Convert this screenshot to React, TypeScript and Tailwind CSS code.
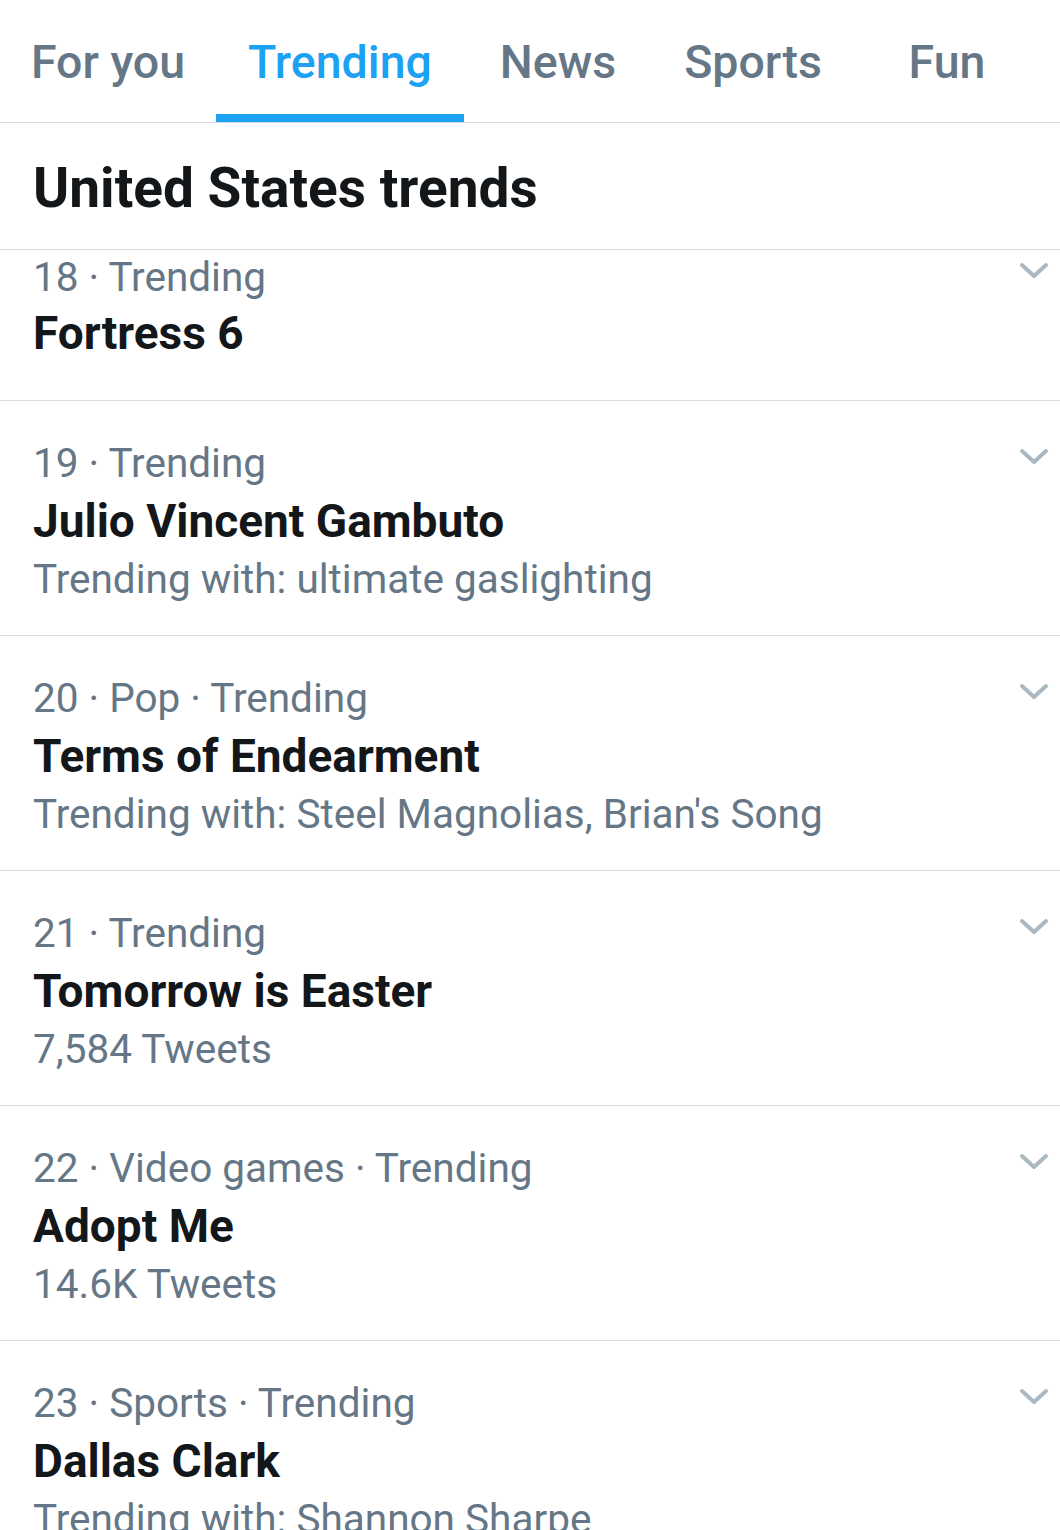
import React from "react";

const FONT = { fontFamily: "Roboto, 'Noto Sans', sans-serif" };

type Trend = {
  meta: string;
  title: string;
  sub?: string;
};

const TABS = [
  { label: "For you", w: "w-[216px]" },
  { label: "Trending", w: "w-[248px]", active: true },
  { label: "News", w: "w-[188px]" },
  { label: "Sports", w: "w-[202px]" },
  { label: "Fun", w: "w-[186px]" },
];

const TRENDS: Trend[] = [
  { meta: "19 · Trending", title: "Julio Vincent Gambuto", sub: "Trending with: ultimate gaslighting" },
  { meta: "20 · Pop · Trending", title: "Terms of Endearment", sub: "Trending with: Steel Magnolias, Brian's Song" },
  { meta: "21 · Trending", title: "Tomorrow is Easter", sub: "7,584 Tweets" },
  { meta: "22 · Video games · Trending", title: "Adopt Me", sub: "14.6K Tweets" },
  { meta: "23 · Sports · Trending", title: "Dallas Clark", sub: "Trending with: Shannon Sharpe" },
];

function Chevron() {
  return (
    <svg width="30" height="18" viewBox="0 0 30 18" fill="none" className="shrink-0">
      <path d="M3 3 L15 14 L27 3" stroke="#aab8c2" strokeWidth="4" strokeLinecap="round" strokeLinejoin="round" />
    </svg>
  );
}

function TrendRow({ t }: { t: Trend }) {
  return (
    <div className="relative border-b border-[#d5dde3] pl-[33px] pt-[33px] pb-[27px]">
      <div className="absolute right-[11px] top-[47px]">
        <Chevron />
      </div>
      <div className="h-[58px] flex items-center text-[40.5px] text-[#657786] whitespace-nowrap">{t.meta}</div>
      <div className="h-[58px] flex items-center text-[46px] font-bold text-[#14171a] whitespace-nowrap">{t.title}</div>
      {t.sub && (
        <div className="h-[58px] flex items-center text-[40.5px] text-[#657786] whitespace-nowrap">{t.sub}</div>
      )}
    </div>
  );
}

export default function App() {
  return (
    <div className="w-[1060px] h-[1530px] overflow-hidden bg-white" style={FONT}>
      <div className="flex h-[123px] border-b border-[#d5dde3]">
        {TABS.map((tab) => (
          <div key={tab.label} className={`${tab.w} relative flex items-center justify-center pt-[4px]`}>
            <span className={`text-[46.5px] font-medium ${tab.active ? "text-[#1da1f2]" : "text-[#657786]"}`}>
              {tab.label}
            </span>
            {tab.active && <div className="absolute left-0 right-0 bottom-0 h-[8px] bg-[#1da1f2]" />}
          </div>
        ))}
      </div>
      <div className="h-[127px] flex items-center pl-[33px] pt-[4px] border-b border-[#d5dde3]">
        <h1 className="text-[55px] font-bold text-[#14171a]">United States trends</h1>
      </div>
      <div className="relative border-b border-[#d5dde3] pl-[33px] pb-[38px]">
        <div className="absolute right-[11px] top-[12px]">
          <Chevron />
        </div>
        <div className="h-[54px] flex items-center text-[40.5px] text-[#657786]">18 · Trending</div>
        <div className="h-[58px] flex items-center text-[46px] font-bold text-[#14171a]">Fortress 6</div>
      </div>
      {TRENDS.map((t) => (
        <TrendRow key={t.title} t={t} />
      ))}
    </div>
  );
}
